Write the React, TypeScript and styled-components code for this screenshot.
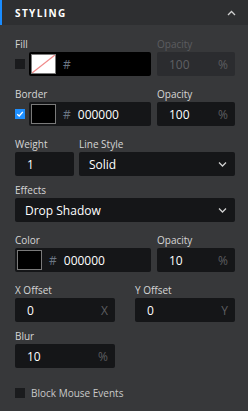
import React from "react";
import styled, { createGlobalStyle } from "styled-components";

const Global = createGlobalStyle`
  html, body { margin: 0; padding: 0; background: #37383a; }
  body { font-family: "Open Sans", "Noto Sans", sans-serif; }
  * { box-sizing: border-box; }
`;

const Panel = styled.div`
  width: 248px;
  height: 411px;
  background: #37383a;
  display: flex;
  flex-direction: column;
`;

const Header = styled.div`
  height: 25px;
  background: #2e2f31;
  border-left: 2px solid #1a8cff;
  display: flex;
  align-items: center;
  justify-content: space-between;
  padding: 0 12px 0 13px;
`;

const Title = styled.span`
  color: #ffffff;
  font-size: 10px;
  font-weight: 700;
  letter-spacing: 1.4px;
`;

const Body = styled.div`
  display: flex;
  flex-direction: column;
  padding: 12px 13px 0 15px;
`;

const Row = styled.div<{ $gap?: number; $mt?: number }>`
  display: flex;
  gap: ${(p) => p.$gap ?? 6}px;
  align-items: flex-end;
  margin-top: ${(p) => p.$mt ?? 11}px;
  &:first-child { margin-top: 0; }
`;

const Field = styled.div<{ $w?: number }>`
  display: flex;
  flex-direction: column;
  gap: 1px;
  width: ${(p) => (p.$w ? `${p.$w}px` : "auto")};
  flex: ${(p) => (p.$w ? "none" : "1")};
`;

const Label = styled.div<{ $disabled?: boolean }>`
  font-size: 10px;
  line-height: 14px;
  color: ${(p) => (p.$disabled ? "#5c5d60" : "#d6d6d6")};
`;

const Box = styled.div<{ $disabled?: boolean; $black?: boolean }>`
  height: 24px;
  border-radius: 2px;
  background: ${(p) => (p.$black ? "#000000" : p.$disabled ? "#2b2c2f" : "#151618")};
  display: flex;
  align-items: center;
  padding: 0 7px 0 12px;
  font-size: 12px;
  color: ${(p) => (p.$disabled ? "#5f6063" : "#ffffff")};
`;

const ColorBox = styled(Box)`
  padding: 0 0 0 2px;
`;

const Value = styled.span`
  flex: 1;
`;

const Unit = styled.span`
  color: #5d5e61;
  font-size: 12px;
`;

const Hash = styled.span`
  color: #6c7684;
  margin: 0 7px 0 7px;
`;

const Swatch = styled.div<{ $empty?: boolean }>`
  width: 25px;
  height: 20px;
  border: 1px solid #7a7a7a;
  background: ${(p) => (p.$empty ? "#ffffff" : "#000000")};
  overflow: hidden;
`;

const CheckRow = styled.div<{ $mt?: number }>`
  display: flex;
  align-items: center;
  gap: 4px;
  margin-top: ${(p) => p.$mt ?? 0}px;
`;

const Check = styled.div<{ $on?: boolean }>`
  width: 10px;
  height: 10px;
  flex: none;
  background: ${(p) => (p.$on ? "#1e8fff" : "#1a1b1d")};
  display: flex;
  align-items: center;
  justify-content: center;
`;

const Select = styled(Box)`
  padding: 0 8px 0 10px;
  justify-content: space-between;
`;

const CheckLabel = styled.span`
  font-size: 10px;
  color: #c9c9c9;
  margin-left: 2px;
`;

const Chevron = ({ up }: { up?: boolean }) => (
  <svg width="9" height="6" viewBox="0 0 9 6">
    <path
      d={up ? "M1 5 L4.5 1.5 L8 5" : "M1 1.5 L4.5 5 L8 1.5"}
      fill="none"
      stroke="#d0d0d0"
      strokeWidth="1.3"
    />
  </svg>
);

const Tick = () => (
  <svg width="8" height="8" viewBox="0 0 8 8">
    <path d="M1.2 4.2 L3.2 6 L6.8 1.8" fill="none" stroke="#fff" strokeWidth="1.3" />
  </svg>
);

const NoColor = () => (
  <svg width="23" height="18" viewBox="0 0 23 18" style={{ display: "block" }}>
    <line x1="0" y1="18" x2="23" y2="0" stroke="#f08a8a" strokeWidth="1.3" />
  </svg>
);

export default function App() {
  return (
    <>
      <Global />
      <Panel>
        <Header>
          <Title>STYLING</Title>
          <Chevron up />
        </Header>
        <Body>
          <Row>
            <Field>
              <Label>Fill</Label>
              <CheckRow>
                <Check />
                <ColorBox $black style={{ flex: 1 }}>
                  <Swatch $empty>
                    <NoColor />
                  </Swatch>
                  <Hash>#</Hash>
                </ColorBox>
              </CheckRow>
            </Field>
            <Field $w={78}>
              <Label $disabled>Opacity</Label>
              <Box $disabled>
                <Value>100</Value>
                <Unit>%</Unit>
              </Box>
            </Field>
          </Row>
          <Row>
            <Field>
              <Label>Border</Label>
              <CheckRow>
                <Check $on>
                  <Tick />
                </Check>
                <ColorBox style={{ flex: 1 }}>
                  <Swatch />
                  <Hash>#</Hash>
                  <Value>000000</Value>
                </ColorBox>
              </CheckRow>
            </Field>
            <Field $w={78}>
              <Label>Opacity</Label>
              <Box>
                <Value>100</Value>
                <Unit>%</Unit>
              </Box>
            </Field>
          </Row>
          <Row $gap={5}>
            <Field $w={59}>
              <Label>Weight</Label>
              <Box>
                <Value>1</Value>
              </Box>
            </Field>
            <Field>
              <Label>Line Style</Label>
              <Select>
                <span>Solid</span>
                <Chevron />
              </Select>
            </Field>
          </Row>
          <Row $mt={7}>
            <Field>
              <Label>Effects</Label>
              <Select>
                <span>Drop Shadow</span>
                <Chevron />
              </Select>
            </Field>
          </Row>
          <Row>
            <Field>
              <Label>Color</Label>
              <ColorBox>
                <Swatch />
                <Hash>#</Hash>
                <Value>000000</Value>
              </ColorBox>
            </Field>
            <Field $w={78}>
              <Label>Opacity</Label>
              <Box>
                <Value>10</Value>
                <Unit>%</Unit>
              </Box>
            </Field>
          </Row>
          <Row $gap={20}>
            <Field $w={100}>
              <Label>X Offset</Label>
              <Box>
                <Value>0</Value>
                <Unit>X</Unit>
              </Box>
            </Field>
            <Field $w={100}>
              <Label>Y Offset</Label>
              <Box>
                <Value>0</Value>
                <Unit>Y</Unit>
              </Box>
            </Field>
          </Row>
          <Row $mt={7}>
            <Field $w={100}>
              <Label>Blur</Label>
              <Box>
                <Value>10</Value>
                <Unit>%</Unit>
              </Box>
            </Field>
          </Row>
          <CheckRow $mt={18}>
            <Check />
            <CheckLabel>Block Mouse Events</CheckLabel>
          </CheckRow>
        </Body>
      </Panel>
    </>
  );
}
